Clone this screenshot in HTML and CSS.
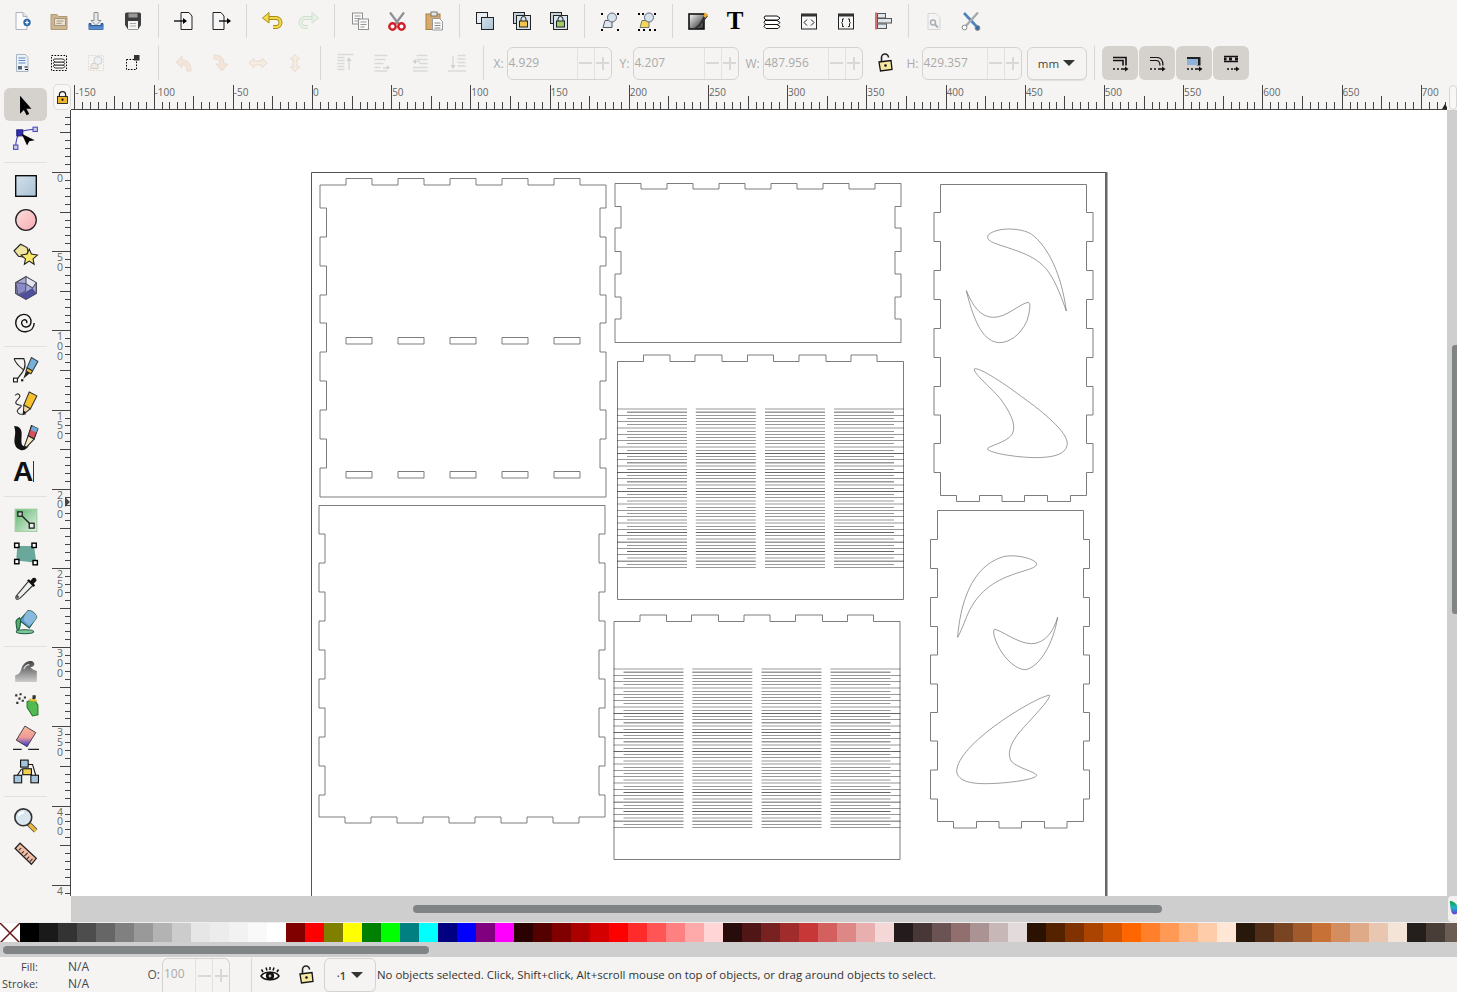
FILE: index.html

```html
<!DOCTYPE html>
<html lang="en">
<head>
<meta charset="UTF-8" />
<title>Inkscape</title>
<link rel="stylesheet" href="styles.css">
</head>
<body>
<svg class="defs" width="0" height="0">
  <defs>
    <linearGradient id="gBlue" x1="0" y1="0" x2="1" y2="1"><stop offset="0" stop-color="#d3e0ea"/><stop offset="1" stop-color="#a9c2d6"/></linearGradient>
    <linearGradient id="gPink" x1="0" y1="0" x2="1" y2="1"><stop offset="0" stop-color="#fbe0e0"/><stop offset="1" stop-color="#f7a9ae"/></linearGradient>
    <linearGradient id="gGreen" x1="0" y1="0" x2="1" y2="1"><stop offset="0" stop-color="#5db56e"/><stop offset="1" stop-color="#e4f2e4"/></linearGradient>
    <linearGradient id="gErase" x1="0" y1="0" x2="0" y2="1"><stop offset="0" stop-color="#f7b9a0"/><stop offset=".55" stop-color="#f09a94"/><stop offset="1" stop-color="#2a35d8"/></linearGradient>
    <linearGradient id="gWave" x1="0" y1="0" x2="0" y2="1"><stop offset="0" stop-color="#444"/><stop offset="1" stop-color="#ccc"/></linearGradient>
    <linearGradient id="gFs" x1="0" y1="0" x2="1" y2="1"><stop offset="0" stop-color="#fff"/><stop offset="1" stop-color="#222"/></linearGradient>
    <linearGradient id="gPick" x1="0" y1="0" x2="0" y2="1"><stop offset="0" stop-color="#14a03c"/><stop offset=".5" stop-color="#1fb4c8"/><stop offset="1" stop-color="#6a35d8"/></linearGradient>
  </defs>
</svg>

<div class="toolbar">
  <span class="tbtn"><svg class="ico" viewBox="0 0 24 24"><path d="M6 3.5h7l4 4v13H6z" fill="#fbfbfb" stroke="#aeb2bb"/><path d="M13 3.5v4h4" fill="#e4e4e4" stroke="#aeb2bb"/><circle cx="17" cy="13.5" r="3.7" fill="#2a69ad"/><path d="M15 13.5h4M17 11.5v4" stroke="#fff" stroke-width="1.2"/></svg></span>
  <span class="tbtn"><svg class="ico" viewBox="0 0 24 24"><path d="M4 5.5h6l1.500 2H20v13H4z" fill="#cdb592" stroke="#b09a78"/><rect x="7.5" y="9.5" width="11" height="7" fill="#e9e2d4" stroke="#a7957a"/><path d="M9.500 12h7M9.500 14.300h5" stroke="#a7957a"/></svg></span>
  <span class="tbtn"><svg class="ico" viewBox="0 0 24 24"><path d="M10 3.5h4v8h3l-5 5-5-5h3z" fill="#e6e8ea" stroke="#8b9096"/><path d="M5 14.5v6h14v-6l-2 0v2H7v-2z" fill="#3f77bd" stroke="#2d5c99"/><rect x="5" y="17.5" width="14" height="3" fill="#5a8ccc"/></svg></span>
  <span class="tbtn"><svg class="ico" viewBox="0 0 24 24"><path d="M4 5a1.500 1.500 0 0 1 1.500-1.500h13A1.500 1.500 0 0 1 20 5v11l-3 4.500H7L4 16z" fill="#3e3e3e"/><rect x="7.5" y="4.5" width="9" height="4" fill="#9a9a9a"/><rect x="7" y="12" width="10" height="8" fill="#f4f4f4"/><path d="M9 14.500h6M9 17h6" stroke="#aaa"/></svg></span>
  <span class="sep"></span>
  <span class="tbtn"><svg class="ico" viewBox="0 0 24 24"><path d="M9 3.5h8l3 3.500v13.500H9z" fill="#f6f6f6" stroke="#222"/><path d="M2 12h11" stroke="#000" stroke-width="1.3"/><path d="M11 9l4 3-4 3z" fill="#000"/></svg></span>
  <span class="tbtn"><svg class="ico" viewBox="0 0 24 24"><path d="M4 3.5h8l3 3.500v13.500H4z" fill="#f6f6f6" stroke="#222"/><path d="M10 12h10" stroke="#000" stroke-width="1.3"/><path d="M18 9l4 3-4 3z" fill="#000"/></svg></span>
  <span class="sep"></span>
  <span class="tbtn"><svg class="ico" viewBox="0 0 24 24"><path d="M5 9h11a4.500 4.500 0 0 1 0 9h-3" fill="none" stroke="#a88c10" stroke-width="4"/><path d="M5 9h11a4.500 4.500 0 0 1 0 9h-3" fill="none" stroke="#f3d84e" stroke-width="2.2"/><path d="M9 3.500L2.500 9 9 14z" fill="#f3d84e" stroke="#a88c10"/></svg></span>
  <span class="tbtn"><svg class="ico" viewBox="0 0 24 24"><path d="M19 9H8a4.500 4.500 0 0 0 0 9h3" fill="none" stroke="#cfe0cc" stroke-width="4"/><path d="M19 9H8a4.500 4.500 0 0 0 0 9h3" fill="none" stroke="#e8f1e6" stroke-width="2.2"/><path d="M15 3.500L21.500 9 15 14z" fill="#e8f1e6" stroke="#cfe0cc"/></svg></span>
  <span class="sep"></span>
  <span class="tbtn"><svg class="ico" viewBox="0 0 24 24"><rect x="4.5" y="4" width="10" height="11" fill="#fafafa" stroke="#8f8f8f"/><path d="M6.500 7h6M6.500 9.500h6M6.500 12h4" stroke="#999"/><rect x="10.5" y="10" width="10" height="10.5" fill="#fafafa" stroke="#8f8f8f"/><path d="M12.500 13h6M12.500 15.500h6M12.500 18h4" stroke="#999"/></svg></span>
  <span class="tbtn"><svg class="ico" viewBox="0 0 24 24"><path d="M5 3.500l9 12M19 3.500l-9 12" stroke="#8d9299" stroke-width="2.2"/><circle cx="7.5" cy="17.5" r="3.2" fill="#fff" stroke="#d21e27" stroke-width="2.4"/><circle cx="16.5" cy="17.5" r="3.2" fill="#fff" stroke="#d21e27" stroke-width="2.4"/></svg></span>
  <span class="tbtn"><svg class="ico" viewBox="0 0 24 24"><rect x="4" y="5" width="14" height="15.5" fill="#d5aa6c" stroke="#a97e3e"/><rect x="9" y="3" width="6" height="4" fill="#e8e8e8" stroke="#777"/><path d="M10.500 9.500h7l3 3v8.500h-10z" fill="#fbfbfb" stroke="#999"/><path d="M12.500 14h6M12.500 16.500h6M12.500 19h6" stroke="#8a8a8a"/></svg></span>
  <span class="sep"></span>
  <span class="tbtn"><svg class="ico" viewBox="0 0 24 24"><rect x="3.5" y="3.5" width="11" height="11" fill="#e8eef3" stroke="#222"/><rect x="8.5" y="8.5" width="12" height="12" fill="url(#gBlue)" stroke="#222"/></svg></span>
  <span class="tbtn"><svg class="ico" viewBox="0 0 24 24"><rect x="3.5" y="3.5" width="11" height="11" fill="#c3d3de" stroke="#222"/><rect x="6.5" y="6.5" width="14" height="14" fill="#d9e5ec" stroke="#222"/><rect x="9.5" y="12" width="8" height="6" fill="#f0c64a" stroke="#222"/><path d="M11 12v-2a2.500 2.500 0 0 1 5 0v2" fill="none" stroke="#222"/></svg></span>
  <span class="tbtn"><svg class="ico" viewBox="0 0 24 24"><rect x="3.5" y="3.5" width="11" height="11" fill="#c3d3de" stroke="#222"/><rect x="6.5" y="6.5" width="14" height="14" fill="#d9e5ec" stroke="#222"/><rect x="9.5" y="12" width="8" height="6" fill="#9ecb62" stroke="#222"/><path d="M11 12v-2a2.500 2.500 0 0 1 5 0v2" fill="none" stroke="#222"/></svg></span>
  <span class="sep"></span>
  <span class="tbtn"><svg class="ico" viewBox="0 0 24 24"><path d="M5 18.500l2-7h7v7z" fill="#dfe7ee" stroke="#556"/><circle cx="14" cy="8.5" r="4.5" fill="#d4e2ec" stroke="#667"/><path d="M3 4h2v2H3zM19 4h2v2h-2zM3 20h2v2H3zM19 20h2v2h-2z" fill="#000"/></svg></span>
  <span class="tbtn"><svg class="ico" viewBox="0 0 24 24"><path d="M5 18.500l2-7h7v7z" fill="#f3d759" stroke="#776"/><circle cx="14" cy="8.5" r="4.5" fill="#d4e2ec" stroke="#667"/><path d="M3 4h2v2H3zM7 4h2v2H7zM19 4h2v2h-2zM3 20h2v2H3zM8 20h2v2H8zM14 20h2v2h-2zM19 20h2v2h-2z" fill="#000"/></svg></span>
  <span class="sep"></span>
  <span class="tbtn"><svg class="ico" viewBox="0 0 24 24"><rect x="3" y="5" width="15" height="15" fill="url(#gFs)" stroke="#111" stroke-width="1.6"/><path d="M6 20c3-1 5-3 7-5l6-10 3 2-8 10c-2 2-5 3-8 3z" fill="#333"/><path d="M17 7l2-3.500 3 2-2.500 3.500z" fill="#f0a830"/></svg></span>
  <span class="tbtn"><span class="glyph-t">T</span></span>
  <span class="tbtn"><svg class="ico" viewBox="0 0 24 24"><g fill="#fff" stroke="#111"><path d="M5 15.500h12l3 2-2 2H6l-2-2z"/><path d="M5 11.500h12l3 2-2 2H6l-2-2z"/><path d="M5 7h12l3 2-2 2H6L4 9z"/></g></svg></span>
  <span class="tbtn"><svg class="ico" viewBox="0 0 24 24"><rect x="4.5" y="5" width="15" height="15" fill="#f6f6f6" stroke="#222"/><rect x="4.5" y="5" width="15" height="2.5" fill="#333"/><path d="M10 10.500l-3 3 3 3M14 10.500l3 3-3 3" fill="none" stroke="#222"/></svg></span>
  <span class="tbtn"><svg class="ico" viewBox="0 0 24 24"><rect x="4.5" y="5" width="15" height="15" fill="#f6f6f6" stroke="#222"/><rect x="4.5" y="5" width="15" height="2.5" fill="#333"/><path d="M10 10h-1.500v3l-1 .8 1 .8v3H10M14 10h1.500v3l1 .8-1 .8v3H14" fill="none" stroke="#222"/></svg></span>
  <span class="tbtn"><svg class="ico" viewBox="0 0 24 24"><path d="M5 3.500v17" stroke="#c42b2b" stroke-width="1.3"/><g fill="#dfe6ec" stroke="#555"><rect x="6.5" y="4.5" width="8" height="4.5"/><rect x="6.5" y="9.5" width="14" height="4.5"/><rect x="6.5" y="15" width="9" height="4.5"/></g></svg></span>
  <span class="sep"></span>
  <span class="tbtn"><svg class="ico" viewBox="0 0 24 24"><path d="M6 4.500h8l4 4v12H6z" fill="#f4f4f4" stroke="#d5d5d5"/><circle cx="11" cy="13.5" r="2.5" fill="none" stroke="#aab0b5" stroke-width="1.5"/><path d="M13 15.500l3 3" stroke="#aab0b5" stroke-width="2"/></svg></span>
  <span class="tbtn"><svg class="ico" viewBox="0 0 24 24"><path d="M5 4l14 15" stroke="#4f82bd" stroke-width="2.6"/><path d="M19 3.500L5 19" stroke="#a3a9af" stroke-width="2.4"/><circle cx="5.5" cy="18.5" r="2.4" fill="#fff" stroke="#888"/><circle cx="18.5" cy="19" r="2.4" fill="#3a6ba6" stroke="#888"/></svg></span>
</div>

<div class="toolbar toolbar-second">
  <span class="tbtn"><svg class="ico" viewBox="0 0 24 24"><path d="M6.500 3.500h9l2.500 3v14H6.500z" fill="#eef2f6" stroke="#a9b6c4"/><path d="M8.500 7h7M8.500 9.500h7M8.500 12h7" stroke="#5b8cc9" stroke-width="1.2"/><rect x="8" y="15" width="4" height="3.5" fill="#567"/><path d="M14.500 16h3M15 18.500h3" stroke="#111"/></svg></span>
  <span class="tbtn"><svg class="ico" viewBox="0 0 24 24"><rect x="4.5" y="4.5" width="15" height="15" fill="none" stroke="#000" stroke-dasharray="1.6 1.4"/><g fill="#fff" stroke="#333"><path d="M7 14h9l2 1.500-1.500 1.500H8L6.500 15.500z"/><path d="M7 11h9l2 1.500-1.500 1.500H8L6.500 12.500z"/><path d="M7 8h9l2 1.500-1.500 1.500H8L6.500 9.500z"/></g></svg></span>
  <span class="tbtn"><svg class="ico" viewBox="0 0 24 24"><rect x="4.5" y="4.5" width="15" height="15" fill="none" stroke="#e5d6cc" stroke-dasharray="1.6 1.4"/><path d="M6.500 17.500l1.500-5h6v5z" fill="#f0ebe5" stroke="#d5cfc8"/><circle cx="14" cy="9.5" r="4" fill="#eef0f1" stroke="#d0d0d0"/></svg></span>
  <span class="tbtn"><svg class="ico" viewBox="0 0 24 24"><rect x="5.5" y="8.5" width="10" height="10" fill="none" stroke="#000" stroke-dasharray="1.6 1.4"/><rect x="13" y="4" width="5.5" height="5.5" fill="#333"/></svg></span>
  <span class="sep"></span>
  <span class="tbtn"><svg class="ico" viewBox="0 0 24 24"><path d="M19 20c0-7-3-11-9-11V5L4 11l6 6v-4c3 0 5 3 5 7z" fill="#f2e6da" stroke="#eadccf"/></svg></span>
  <span class="tbtn"><svg class="ico" viewBox="0 0 24 24"><path d="M5 4c7 0 10 3 10 9h4l-6 7-6-7h4c0-3-2-5-6-5z" fill="#f2e6da" stroke="#eadccf"/></svg></span>
  <span class="tbtn"><svg class="ico" viewBox="0 0 24 24"><path d="M3 12l5-4.500V10h8V7.500L21 12l-5 4.500V14H8v2.500z" fill="#f5ede4" stroke="#e8dacb"/></svg></span>
  <span class="tbtn"><svg class="ico" viewBox="0 0 24 24"><path d="M12 3.500L16.500 8H14v8h2.500L12 20.500 7.500 16H10V8H7.500z" fill="#f5ede4" stroke="#e8dacb"/></svg></span>
  <span class="sep"></span>
  <span class="tbtn"><svg class="ico" viewBox="0 0 24 24"><path d="M3.500 3.500h16M3.500 6.500h7M3.500 9.500h7M3.500 12.500h7M3.500 15.500h7M3.500 18.500h7M15 7v12" stroke="#d9d9d9" stroke-width="1.5"/><path d="M12.500 10L15 6.500 17.500 10z" fill="#d0d0d0"/></svg></span>
  <span class="tbtn"><svg class="ico" viewBox="0 0 24 24"><path d="M3.500 4.500h13M3.500 8.500h11M3.500 12.500h9M3.500 16.500h6M3.500 20h13M12 17h6" stroke="#d9d9d9" stroke-width="1.5"/><path d="M16 14l3 3-3 1z" fill="#d0d0d0"/></svg></span>
  <span class="tbtn"><svg class="ico" viewBox="0 0 24 24"><path d="M8.500 4.500h11M8.500 8.500h11M11 12.500h8.500M5 10.500h7M5 16.500h14.500M5 20h14.500" stroke="#d9d9d9" stroke-width="1.5"/><path d="M8 8l-3.500 2.500L8 13z" fill="#d0d0d0"/></svg></span>
  <span class="tbtn"><svg class="ico" viewBox="0 0 24 24"><path d="M12.500 4.500h8M12.500 8h8M12.500 11.500h8M12.500 15h8M3 20h18M8 5v10" stroke="#d9d9d9" stroke-width="1.5"/><path d="M5.500 14L8 18l2.500-4z" fill="#d0d0d0"/></svg></span>
  <span class="sep sep-tight"></span>

  <span class="field-label label-x">X:</span>
  <span class="spin spin-x"><span class="spin-value">4.929</span><span class="spin-btn minus"></span><span class="spin-btn plus"></span></span>
  <span class="field-label label-y">Y:</span>
  <span class="spin spin-y"><span class="spin-value">4.207</span><span class="spin-btn minus"></span><span class="spin-btn plus"></span></span>
  <span class="field-label label-w">W:</span>
  <span class="spin spin-w"><span class="spin-value">487.956</span><span class="spin-btn minus"></span><span class="spin-btn plus"></span></span>
  <span class="lock-btn"><svg class="ico" viewBox="0 0 24 24"><path d="M8.500 10V6.500a3.500 3.500 0 0 1 7 0" fill="none" stroke="#222" stroke-width="1.6"/><path d="M6 11l12-1.500 1 9L7.500 20z" fill="#f5e6a0" stroke="#111" stroke-width="1.3"/><circle cx="12.5" cy="14.5" r="1.3" fill="#111"/></svg></span>
  <span class="field-label label-h">H:</span>
  <span class="spin spin-w"><span class="spin-value">429.357</span><span class="spin-btn minus"></span><span class="spin-btn plus"></span></span>
  <span class="unit-menu">mm<i class="caret"></i></span>
  <span class="sep sep-snap"></span>
  <span class="snap"><svg class="ico" viewBox="0 0 24 24"><path d="M5 6.500h13v8" fill="none" stroke="#111" stroke-width="1.6"/><path d="M5 9.500h10v5" fill="none" stroke="#111" stroke-width="1.6"/><path d="M5 18h2M9 18h2M13 18h6" stroke="#111" stroke-width="1.3"/><path d="M17 15.500l3.500 2.500-3.500 2.500z" fill="#111"/></svg></span>
  <span class="snap"><svg class="ico" viewBox="0 0 24 24"><path d="M5 6.500h7c4 0 6 3 6 8" fill="none" stroke="#111" stroke-width="1.2"/><path d="M5 9.500h6c3 0 4 2 4 5" fill="none" stroke="#111" stroke-width="1.2"/><path d="M5 18h2M9 18h2M13 18h6" stroke="#111" stroke-width="1.3"/><path d="M17 15.500l3.500 2.500-3.500 2.500z" fill="#111"/></svg></span>
  <span class="snap"><svg class="ico" viewBox="0 0 24 24"><path d="M5 6h13.500v8.500H15V9.500H5z" fill="#222"/><path d="M5 8h11v6H5z" fill="#8db3da"/><path d="M5 18h2M9 18h2M13 18h6" stroke="#111" stroke-width="1.3"/><path d="M17 15.500l3.500 2.500-3.500 2.500z" fill="#111"/></svg></span>
  <span class="snap"><svg class="ico" viewBox="0 0 24 24"><path d="M5 5.500h14M5 10.500h14" stroke="#111" stroke-width="1.4"/><path d="M5 8h2.500M10 8h3M16 8h3" stroke="#111" stroke-width="3"/><path d="M8 18h2M12 18h2M15 18h4" stroke="#111" stroke-width="1.3"/><path d="M17 15.500l3.500 2.500-3.500 2.500z" fill="#111"/></svg></span>
</div>

<div class="workspace">
  <div class="toolbox">
    <span class="tool active"><svg class="ico-tool" viewBox="0 0 24 24"><path d="M6.500 3.500V20l3.500-3.500 2.600 5 2.400-1.300-2.600-4.700H17z" fill="#000"/></svg></span>
    <span class="tool"><svg class="ico-tool" viewBox="0 0 24 24"><path d="M2.500 21c0-8 2-12 4-14s7-2.500 14-3" fill="none" stroke="#3d3db0"/><rect x="3.5" y="4.5" width="5.5" height="5.5" fill="#2e2eb8" stroke="#22227a"/><rect x="0.5" y="18.5" width="4" height="4" fill="#ccd" stroke="#4b4bc8"/><rect x="18.5" y="2" width="4" height="4" fill="#ccd" stroke="#4b4bc8"/><path d="M8 8l5 11 2-4 5-1z" fill="#000"/></svg></span>
    <span class="sep-h"></span>
    <span class="tool"><svg class="ico-tool" viewBox="0 0 24 24"><rect x="2.5" y="2.5" width="19" height="19" fill="url(#gBlue)" stroke="#000" stroke-width="1.2"/></svg></span>
    <span class="tool"><svg class="ico-tool" viewBox="0 0 24 24"><circle cx="12" cy="12" r="9.500" fill="url(#gPink)" stroke="#222" stroke-width="1.2"/></svg></span>
    <span class="tool"><svg class="ico-tool" viewBox="0 0 24 24"><path d="M1 9l6-6 6 3 1 4-3 5-6-1z" fill="#f0e4a0" stroke="#222"/><path d="M15 7.500l2 4.500 5.500 1-4 3.500 1 5-4.500-3-4.500 3 1-5-4-3.500 5.500-1z" fill="#f7e86c" stroke="#222"/></svg></span>
    <span class="tool"><svg class="ico-tool" viewBox="0 0 24 24"><path d="M12 1.500l9.500 6v9.500L12 22.500 2.500 17V7z" fill="#a9a9d6" stroke="#333"/><path d="M12 1.500L21.500 7 18 12l-6-4z" fill="#e6e6f2" stroke="#556"/><path d="M18 12l3.500 5-9.500 5.500-7-4 7-3z" fill="#4f4f9c"/><path d="M12 8l-.5 7-7 3.500L2.500 7z" fill="#8a8acb" stroke="#556"/></svg></span>
    <span class="tool"><svg class="ico-tool" viewBox="0 0 24 24"><path d="M12.500 13c1-1.500-.5-3.500-2.500-3s-3 3.500-1 5.500 6.500 1.500 7.500-2.500-2-8-6.500-8-8 4-7.500 8.500 4.500 8 9.500 7.500 7.500-4 7.500-8" fill="none" stroke="#111" stroke-width="1.3"/></svg></span>
    <span class="sep-h"></span>
    <span class="tool"><svg class="ico-tool" viewBox="0 0 24 24"><path d="M1 1.500h9c2 5 1 9-1 12s-4 5-5 7" fill="none" stroke="#222" stroke-width="1.100"/><path d="M1 1.500c2 6 6 8 8.500 10" fill="none" stroke="#222"/><rect x="0.5" y="19.5" width="3.500" height="3.500" fill="#fff" stroke="#111"/><rect x="7.5" y="20.5" width="2" height="2" fill="#111"/><path d="M17 .5l6 3.500-5 9-5-3z" fill="#78b0d8" stroke="#345"/><path d="M13 10l5 3-1.500 2.500-4.500-2.500z" fill="#f0c040" stroke="#333"/><path d="M12 13l3.500 2L9.500 20z" fill="#222"/></svg></span>
    <span class="tool"><svg class="ico-tool" viewBox="0 0 24 24"><path d="M2 4c3-3 6 0 3 3s-4 5 1 6-3 3-2 6 4 3 8 2" fill="none" stroke="#333"/><path d="M15 1l7 3.500-6 12-6-3.500z" fill="#f7c12e" stroke="#333"/><path d="M10 13l6 3.500-6.500 5z" fill="#f4d9a8" stroke="#333"/><path d="M9.500 18v3.500l2.500-2z" fill="#111"/></svg></span>
    <span class="tool"><svg class="ico-tool" viewBox="0 0 24 24"><path d="M1 1c5 0 7 3 7 7s-1 9 1 11 5 0 6-1c-1 3-4 6-8 5S.5 18 1.500 12 2 5 1 1z" fill="#111"/><path d="M17 .5l6 3-3.500 9.500-5.500-3z" fill="#d65060" stroke="#222"/><path d="M18 1l5 2.500-1.500 3.500-5-2.500z" fill="#6ea8d4"/><path d="M14 10l5.500 3-7 7.500-2-1z" fill="#f4e6c0" stroke="#222"/></svg></span>
    <span class="tool"><span class="glyph-a">A</span><i class="text-cursor"></i></span>
    <span class="sep-h"></span>
    <span class="tool"><svg class="ico-tool" viewBox="0 0 24 24"><rect x="2" y="2" width="20" height="20.5" fill="url(#gGreen)" stroke="#9ccc9f"/><path d="M7 7l9 9" stroke="#222" stroke-width="1.2"/><rect x="4.5" y="4.5" width="4" height="4" fill="#c4d8c4" stroke="#222" stroke-width="1.2"/><rect x="15" y="15" width="4.5" height="4.5" fill="#eee" stroke="#222" stroke-width="1.2"/></svg></span>
    <span class="tool"><svg class="ico-tool" viewBox="0 0 24 24"><path d="M4 4.500h15.500l2 15.500L3 18z" fill="#6aa89c"/><g fill="#fff" stroke="#000" stroke-width="1.3"><rect x="1.5" y="2" width="4" height="4"/><rect x="17.5" y="2" width="4" height="4"/><rect x="1.5" y="17" width="4" height="4"/><rect x="18.5" y="18" width="4" height="4"/></g></svg></span>
    <span class="tool"><svg class="ico-tool" viewBox="0 0 24 24"><path d="M15 5l4 4-11 11c-2 2-4 3-5 2s0-3 2-5z" fill="#eef0f0" stroke="#333"/><path d="M13 5l6 6 1.500-1.500-1.500-1.500 2.500-2.500c1-2-2-4-3.500-2.500L16 5.500 14.500 4z" fill="#111"/><path d="M3 19l2 2" stroke="#555" stroke-width="2.5"/></svg></span>
    <span class="tool"><svg class="ico-tool" viewBox="0 0 24 24"><path d="M14 1.500c4 0 7 3 8 6l-7 10-9-7z" fill="#5a9ad0" stroke="#1d5a40"/><path d="M14 1.500c-3 2-4 6-4 9l5 5c3-2 5-5 7-8-1-3-4-6-8-6z" fill="#89b9dd"/><path d="M6 8C4 9 2 11 3 14c0 3 1 5 1 6 3-1 3-7 3-10z" fill="#52b06a" stroke="#1d5a40"/><ellipse cx="11" cy="21" rx="8" ry="1.800" fill="#7ec89a" stroke="#1d5a40"/></svg></span>
    <span class="sep-h"></span>
    <span class="tool"><svg class="ico-tool" viewBox="0 0 24 24"><path d="M2 23v-6c4-1 5-3 6-7 2-6 9-8 11-5 2 2-1 5-3 4 1 2 3 3 6 4v10z" fill="url(#gWave)"/><path d="M10 11c1-2 3-4 5-4" stroke="#ddd" fill="none"/></svg></span>
    <span class="tool"><svg class="ico-tool" viewBox="0 0 24 24"><path d="M13 10l6-3 4 6v9l-5 1-5-8z" fill="#53b953" stroke="#2b7a2b"/><path d="M18 4h3v3l-3 1z" fill="#333"/><path d="M15 8l7 1" stroke="#e8c030" stroke-width="2"/><path d="M2 3h2v2H2zM6 2h2v2H6zM10 5h2v2h-2zM5 6h2v2H5zM8 8h2v2H8zM3 10h2v2H3z" fill="#333"/></svg></span>
    <span class="tool"><svg class="ico-tool" viewBox="0 0 24 24"><path d="M11 1l10 6-8 13-10-6z" fill="url(#gErase)" stroke="#333" stroke-width=".8"/><path d="M0 22.500h8M14 22.500h10" stroke="#222" stroke-width="1.3"/></svg></span>
    <span class="tool"><svg class="ico-tool" viewBox="0 0 24 24"><path d="M11 5h7l3 10M8 9L4 15M13 9v5" fill="none" stroke="#111"/><rect x="7" y="1" width="7" height="6.5" fill="#a6c4dc" stroke="#111"/><rect x="9" y="9" width="8" height="5.5" fill="#f1cf50" stroke="#111"/><rect x="1" y="15" width="7" height="7" fill="#a6c4dc" stroke="#111"/><rect x="16.5" y="15" width="7" height="7" fill="#a6c4dc" stroke="#111"/></svg></span>
    <span class="sep-h"></span>
    <span class="tool"><svg class="ico-tool" viewBox="0 0 24 24"><path d="M14 15l7 7" stroke="#555" stroke-width="4.5"/><path d="M15 16l6 6" stroke="#eeb73a" stroke-width="3"/><circle cx="9.5" cy="9.5" r="7.800" fill="#d9e6f0" stroke="#333" stroke-width="1.5"/><path d="M5 8c1-2 3-3 5-3" stroke="#fff" stroke-width="2" fill="none"/></svg></span>
    <span class="tool"><svg class="ico-tool" viewBox="0 0 24 24"><path d="M6.500 2L21.500 16 17 21.500 2 7z" fill="#f2bba3" stroke="#222" stroke-width="1.2"/><path d="M6 7l2-2M8.500 10l2-2M11 12.500l3-3M13.500 15l2-2M16 17.500l2.500-2.500" stroke="#333" transform="translate(-.5 1.5)"/></svg></span>
  </div>

  <div class="ruler-corner"><span class="lock-corner"><svg viewBox="0 0 24 24"><path d="M7 11V7.500a5 5 0 0 1 10 0V11" fill="none" stroke="#222" stroke-width="2"/><rect x="4" y="10.5" width="16" height="11" fill="#eeb52e" stroke="#111" stroke-width="1.3"/><circle cx="12" cy="15.5" r="1.8" fill="#111"/></svg></span></div>

  <div class="ruler-h">
    <span>-150</span><span>-100</span><span>-50</span><span>0</span><span>50</span><span>100</span><span>150</span><span>200</span><span>250</span><span>300</span><span>350</span><span>400</span><span>450</span><span>500</span><span>550</span><span>600</span><span>650</span><span>700</span>
    <i class="ruler-marker-h"></i>
  </div>

  <div class="corner-right"><span class="zoom-corner"></span></div>

  <div class="ruler-v">
    <span>0</span><span>50</span><span>100</span><span>150</span><span>200</span><span>250</span><span>300</span><span>350</span><span>400</span><span class="ruler-v-last">4</span>
    <i class="ruler-marker-v"></i>
  </div>

  <div class="canvas">
    <svg class="drawing" width="1376" height="786" viewBox="71 110 1376 786">
      <g class="cut">
        <!-- page -->
        <path class="page-edge" d="M311.5 896V172.5H1105.5"/>
        <rect x="1105" y="172" width="2.5" height="724" fill="#666"/>

        <!-- left panels -->
        <path d="M320 185H346V178.5H372V185H398V178.5H424V185H450V178.5H476V185H502V178.5H528V185H554V178.5H580V185H606V208H600V237H606V266H600V295H606V323H600V352H606V381H600V410H606V439H600V468H606V497H320V468H326.5V439H320V410H326.5V381H320V352H326.5V323H320V295H326.5V266H320V237H326.5V208H320Z"/>
        <path id="slots" d="M346 337.5h26v6.500h-26zM398 337.5h26v6.500h-26zM450 337.5h26v6.500h-26zM502 337.5h26v6.500h-26zM554 337.5h26v6.500h-26z"/>
        <use href="#slots" y="134"/>
        <path d="M319 505.5H605V534H599V563H605V592H599V621H605V650H599V679H605V708H599V737H605V766H599V795H605V817H579V823H553V817H527V823H501V817H475V823H449V817H423V823H397V817H371V823H345V817H319V795H325V766H319V737H325V708H319V679H325V650H319V621H325V592H319V563H325V534H319Z"/>

        <!-- middle panels -->
        <path d="M615 183.5H641V189H667V183.5H693V189H719V183.5H745V189H771V183.5H797V189H823V183.5H849V189H875V183.5H901V206.5H895V228H901V251.5H895V274H901V297H895V319H901V342.5H615V319H621V297H615V274H621V251.5H615V228H621V206.5H615Z"/>
        <g id="hatched">
          <path d="M617.5 361.5H643.5V355H670V361.5H695V355H722V361.5H747.5V355H773.5V361.5H799V355H826V361.5H851V355H877V361.5H903.5V599.5H617.5Z"/>
          <path class="hatch hatch-end" d="M622 408.7V568M899 408.7V568"/>
          <path class="hatch" d="M657 408.7V568M725.8 408.7V568M795 408.7V568M864 408.7V568"/>
        </g>
        <use href="#hatched" x="-3.5" y="260"/>

        <!-- right panels -->
        <path d="M940.5 184.5H1086.5V212.5H1093V241.5H1086.5V270.5H1093V299.5H1086.5V328.5H1093V357.5H1086.5V386.5H1093V415H1086.5V443.5H1093V472.5H1086.5V495.5H1070.5V501.5H1047.5V495.5H1024.5V501.5H1002V495.5H979.5V501.5H956.5V495.5H940.5V472.5H934V443.5H940.5V415H934V386.5H940.5V357.5H934V328.5H940.5V299.5H934V270.5H940.5V241.5H934V212.5H940.5Z"/>
        <g class="curves" transform="translate(925 175) scale(.3333)">
          <path d="M424 408C410 300 370 215 320 178C290 158 215 155 190 180C185 190 190 196 205 203C260 225 330 235 370 290C395 325 410 370 424 408Z"/>
          <path d="M124 347C145 395 165 425 205 427C245 428 285 385 310 382C318 385 315 410 305 440C285 480 255 503 222 503C180 500 150 455 124 347Z"/>
          <path d="M148 582C160 575 230 620 290 665C360 715 425 770 427 805C425 835 395 847 335 848C280 848 195 835 187 822C190 812 240 805 260 780C275 755 262 720 225 670C195 635 145 595 148 582Z"/>
        </g>
        <path d="M937.5 510.5H1083.5V539.5H1089.5V568.5H1083.5V597.5H1089.5V626.5H1083.5V655H1089.5V684H1083.5V712.5H1089.5V741H1083.5V770H1089.5V799H1083.5V821.5H1067V828H1044.5V821.5H1021.5V828H999V821.5H976.5V828H953.5V821.5H937.5V799H930.5V770H937.5V741H930.5V712.5H937.5V684H930.5V655H937.5V626.5H930.5V597.5H937.5V568.5H930.5V539.5H937.5Z"/>
        <g class="curves" transform="translate(925 500) scale(.3333)">
          <path d="M98 412C105 320 135 200 235 170C270 162 330 175 335 192C335 205 300 210 260 225C190 250 150 290 125 350C113 380 105 400 98 412Z"/>
          <path d="M398 352C385 395 360 430 320 431C280 432 225 388 208 388C200 395 215 440 240 470C260 495 285 510 302 509C345 500 385 430 398 352Z"/>
          <path d="M374 586C360 585 290 620 220 670C150 720 95 775 95 815C100 845 140 852 190 851C250 850 335 838 335 826C330 815 280 805 260 785C245 765 255 730 285 695C320 655 375 600 374 586Z"/>
        </g>
      </g>
    </svg>
  </div>

  <div class="scroll-v"><span class="thumb-v"></span></div>
  <div class="scroll-h"><span class="thumb-h"></span></div>
  <div class="picker"><svg viewBox="0 0 9 17"><path d="M1 0c4 0 7 3 8 5v9c-3 2-5 1-6-1C2 10 1 5 1 0z" fill="url(#gPick)"/></svg></div>
</div>

<div class="palette">
  <span class="swatch-none"><svg viewBox="0 0 20 20"><path d="M0 0l20 20M20 0L0 20" stroke="#6b1717" stroke-width="1.5"/></svg></span>
  <span class="swatch" style="background:#000000"></span><span class="swatch" style="background:#1a1a1a"></span><span class="swatch" style="background:#333333"></span><span class="swatch" style="background:#4d4d4d"></span><span class="swatch" style="background:#666666"></span><span class="swatch" style="background:#808080"></span><span class="swatch" style="background:#999999"></span><span class="swatch" style="background:#b3b3b3"></span><span class="swatch" style="background:#cccccc"></span><span class="swatch" style="background:#e6e6e6"></span><span class="swatch" style="background:#ececec"></span><span class="swatch" style="background:#f2f2f2"></span><span class="swatch" style="background:#f9f9f9"></span><span class="swatch" style="background:#ffffff"></span>
  <span class="swatch" style="background:#800000"></span><span class="swatch" style="background:#ff0000"></span><span class="swatch" style="background:#808000"></span><span class="swatch" style="background:#ffff00"></span><span class="swatch" style="background:#008000"></span><span class="swatch" style="background:#00ff00"></span><span class="swatch" style="background:#008080"></span><span class="swatch" style="background:#00ffff"></span><span class="swatch" style="background:#000080"></span><span class="swatch" style="background:#0000ff"></span><span class="swatch" style="background:#800080"></span><span class="swatch" style="background:#ff00ff"></span>
  <span class="swatch" style="background:#2b0000"></span><span class="swatch" style="background:#550000"></span><span class="swatch" style="background:#800000"></span><span class="swatch" style="background:#aa0000"></span><span class="swatch" style="background:#d40000"></span><span class="swatch" style="background:#ff0000"></span><span class="swatch" style="background:#ff2a2a"></span><span class="swatch" style="background:#ff5555"></span><span class="swatch" style="background:#ff8080"></span><span class="swatch" style="background:#ffaaaa"></span><span class="swatch" style="background:#ffd5d5"></span>
  <span class="swatch" style="background:#280b0b"></span><span class="swatch" style="background:#501616"></span><span class="swatch" style="background:#782121"></span><span class="swatch" style="background:#a02c2c"></span><span class="swatch" style="background:#c83737"></span><span class="swatch" style="background:#d35f5f"></span><span class="swatch" style="background:#de8787"></span><span class="swatch" style="background:#e9afaf"></span><span class="swatch" style="background:#f4d7d7"></span>
  <span class="swatch" style="background:#241c1c"></span><span class="swatch" style="background:#483737"></span><span class="swatch" style="background:#6c5353"></span><span class="swatch" style="background:#916f6f"></span><span class="swatch" style="background:#ac9393"></span><span class="swatch" style="background:#c8b7b7"></span><span class="swatch" style="background:#e3dbdb"></span>
  <span class="swatch" style="background:#2b1100"></span><span class="swatch" style="background:#552200"></span><span class="swatch" style="background:#803300"></span><span class="swatch" style="background:#aa4400"></span><span class="swatch" style="background:#d45500"></span><span class="swatch" style="background:#ff6600"></span><span class="swatch" style="background:#ff7f2a"></span><span class="swatch" style="background:#ff9955"></span><span class="swatch" style="background:#ffb380"></span><span class="swatch" style="background:#ffccaa"></span><span class="swatch" style="background:#ffe6d5"></span>
  <span class="swatch" style="background:#28170b"></span><span class="swatch" style="background:#502d16"></span><span class="swatch" style="background:#784421"></span><span class="swatch" style="background:#a05a2c"></span><span class="swatch" style="background:#c87137"></span><span class="swatch" style="background:#d38d5f"></span><span class="swatch" style="background:#deaa87"></span><span class="swatch" style="background:#e9c6af"></span><span class="swatch" style="background:#f4e3d7"></span>
  <span class="swatch" style="background:#241f1c"></span><span class="swatch" style="background:#483e37"></span><span class="swatch" style="background:#6c5d53"></span>
</div>
<div class="palette-scroll"><span class="thumb-palette"></span></div>

<div class="statusbar">
  <div class="fill-stroke">
    <span class="fs-name">Fill:</span><span class="fs-value">N/A</span>
    <span class="fs-name">Stroke:</span><span class="fs-value">N/A</span>
  </div>
  <span class="field-label label-o">O:</span>
  <span class="spin spin-o"><span class="spin-value">100</span><span class="spin-btn minus"></span><span class="spin-btn plus"></span></span>
  <span class="sep sep-status"></span>
  <span class="status-icon"><svg class="ico" viewBox="0 0 24 24"><path d="M3 13c3-5 15-5 18 0-3 5-15 5-18 0z" fill="#fff" stroke="#111" stroke-width="1.5"/><circle cx="12" cy="13" r="4.2" fill="#111"/><circle cx="12" cy="13" r="1.4" fill="#bbb"/><path d="M5 9L3.500 6.500M9 7.500L8 4.500M12 7V4M15 7.500l1-3M19 9l1.500-2.500" stroke="#111" stroke-width="1.5"/></svg></span>
  <span class="status-icon"><svg class="ico" viewBox="0 0 24 24"><path d="M8.500 10V6.500a3.500 3.500 0 0 1 7 0" fill="none" stroke="#222" stroke-width="1.6"/><path d="M6 11l12-1.500 1 9L7.500 20z" fill="#f5e6a0" stroke="#111" stroke-width="1.3"/><circle cx="12.5" cy="14.5" r="1.3" fill="#111"/></svg></span>
  <span class="layer-menu"><span class="layer-name">·1</span><i class="caret"></i></span>
  <span class="message">No objects selected. Click, Shift+click, Alt+scroll mouse on top of objects, or drag around objects to select.</span>
</div>
</body>
</html>
```

FILE: styles.css

```css
:root {
  --bg: #f5f4f2;
  --trough: #cecece;
  --thumb: #808484;
  --tick: #444;
  --line: #d9d7d4;
  --border: #d5d3d0;
  --active: #d5d1cd;
  --muted: #aaa;
  --ink: #444;
  --font: 'Open Sans', 'Noto Sans', sans-serif;
}

html, body {
  margin: 0;
  height: 100%;
}

body {
  width: 1457px;
  height: 992px;
  overflow: hidden;
  background: var(--bg);
  font-family: var(--font);
  font-size: 11px;
  color: var(--ink);
  display: flex;
  flex-direction: column;
}

.defs { position: absolute; }

svg { display: block; }

/* top toolbars */
.toolbar {
  flex: none;
  height: 42px;
  padding-left: 3.5px;
  display: flex;
  align-items: center;
}

.toolbar-second {
  margin-bottom: 1px;
}

.tbtn {
  flex: none;
  width: 37px;
  display: flex;
  justify-content: center;
  align-items: center;
}

.ico { width: 24px; height: 24px; }

.sep {
  flex: none;
  width: 1px;
  height: 34px;
  margin: 0 6.5px;
  background: var(--line);
}

.sep-tight { margin: 0 0 0 7.5px; }
.sep-snap { margin: 0 7px; }

.glyph-t {
  font-family: 'Liberation Serif', serif;
  font-weight: bold;
  font-size: 25px;
  line-height: 24px;
  color: #000;
}

.field-label {
  flex: none;
  font-size: 12px;
  color: var(--muted);
}

.label-x { margin-left: 9.5px; width: 13px; }
.label-y { margin-left: 8px; width: 13px; }
.label-w { margin-left: 7px; width: 17px; }
.label-h { width: 15px; }

.spin {
  flex: none;
  box-sizing: border-box;
  height: 33px;
  display: flex;
  border: 1px solid var(--border);
  border-radius: 6px;
}

.spin-x { width: 105px; }
.spin-y { width: 106px; }
.spin-w { width: 100px; }

.spin-value {
  flex: 1;
  padding-left: 1px;
  font-size: 12px;
  line-height: 29px;
  color: var(--muted);
}

.spin-btn {
  flex: none;
  width: 17px;
  border-left: 1px solid #e4e2df;
  box-sizing: border-box;
  background: linear-gradient(#d8d8d8, #d8d8d8) center / 13px 2px no-repeat;
}

.spin-btn.plus {
  background:
    linear-gradient(#d8d8d8, #d8d8d8) center / 13px 2px no-repeat,
    linear-gradient(#d8d8d8, #d8d8d8) center / 2px 13px no-repeat;
}

.lock-btn {
  flex: none;
  width: 44px;
  display: flex;
  justify-content: center;
}

.unit-menu {
  flex: none;
  box-sizing: border-box;
  width: 60px;
  height: 33px;
  margin-left: 5px;
  display: flex;
  justify-content: center;
  align-items: center;
  gap: 4px;
  border: 1px solid var(--border);
  border-radius: 6px;
  box-shadow: 0 1px 1px rgba(0,0,0,0.08);
  font-size: 11.5px;
}

.caret {
  width: 0;
  height: 0;
  border-left: 6px solid transparent;
  border-right: 6px solid transparent;
  border-top: 6px solid #333;
}

.snap {
  flex: none;
  width: 36px;
  height: 34px;
  margin-right: 1px;
  display: flex;
  justify-content: center;
  align-items: center;
  background: var(--active);
  border-radius: 6px;
}

/* main area */
.workspace {
  flex: none;
  height: 837px;
  display: grid;
  grid-template-columns: 52px 19px 1376px 10px;
  grid-template-rows: 25px 786px 26px;
  position: relative;
}

.toolbox {
  grid-row: 1 / 4;
  padding-top: 3px;
  display: flex;
  flex-direction: column;
  align-items: flex-start;
  overflow: hidden;
}

.tool {
  flex: none;
  width: 43px;
  height: 34px;
  margin-left: 4px;
  display: flex;
  justify-content: center;
  align-items: center;
  position: relative;
}

.tool.active {
  height: 33px;
  background: var(--active);
  border-radius: 6px;
}

.ico-tool { width: 26px; height: 26px; }

.sep-h {
  flex: none;
  width: 43px;
  height: 1px;
  margin: 6.5px 0 6.5px 4px;
  background: #e2e0dd;
}

.glyph-a {
  font-family: 'Liberation Sans', sans-serif;
  font-weight: bold;
  font-size: 28px;
  line-height: 26px;
  color: #111;
  margin-right: 5px;
}

.text-cursor {
  position: absolute;
  left: 29px;
  top: 6px;
  width: 1px;
  height: 21px;
  background: #333;
}

.ruler-corner { display: flex; }

.lock-corner {
  box-sizing: border-box;
  width: 18px;
  height: 26px;
  margin: -1px 0 0 1px;
  display: flex;
  justify-content: center;
  align-items: center;
  border: 1px solid #dedcd9;
  border-radius: 5px;
  background: #f8f7f5;
}

.lock-corner svg { width: 15px; height: 15px; }

/* rulers: ticks are gradients, labels sit in flow at the 50mm step */
.ruler-h {
  position: relative;
  overflow: hidden;
  box-sizing: border-box;
  padding-left: 3.4px;
  display: flex;
  border-bottom: 1px solid var(--tick);
  background-image:
    repeating-linear-gradient(90deg, transparent 0 3.4px, var(--tick) 3.4px 4.4px, transparent 4.4px 79.2px),
    repeating-linear-gradient(90deg, transparent 0 3.4px, var(--tick) 3.4px 4.4px, transparent 4.4px 39.6px),
    repeating-linear-gradient(90deg, transparent 0 3.4px, var(--tick) 3.4px 4.4px, transparent 4.4px 7.92px);
  background-size: 100% 24px, 100% 13px, 100% 7px;
  background-position: bottom;
  background-repeat: no-repeat;
}

.ruler-h span {
  flex: 0 0 79.2px;
  padding: 0 0 0 1px;
  box-sizing: border-box;
  font-size: 10px;
  line-height: 14px;
  color: #666;
}

.ruler-marker-h {
  position: absolute;
  left: 1371px;
  bottom: 0;
  border-left: 3px solid transparent;
  border-right: 3px solid transparent;
  border-bottom: 5px solid #222;
}

.corner-right {
  display: flex;
  background: var(--bg);
}

.zoom-corner {
  box-sizing: border-box;
  width: 12px;
  height: 25px;
  margin-left: 2px;
  border: 1px solid #d8d6d3;
  border-radius: 4px;
  background: #f8f7f5;
}

.ruler-v {
  position: relative;
  overflow: hidden;
  box-sizing: border-box;
  padding-top: 62px;
  display: flex;
  flex-direction: column;
  border-right: 1px solid var(--tick);
  background-image:
    repeating-linear-gradient(180deg, transparent 0 62px, var(--tick) 62px 63px, transparent 63px 79.2px),
    repeating-linear-gradient(180deg, transparent 0 22.4px, var(--tick) 22.4px 23.4px, transparent 23.4px 39.6px),
    repeating-linear-gradient(180deg, transparent 0 6.56px, var(--tick) 6.56px 7.56px, transparent 7.56px 7.92px);
  background-size: 18px 100%, 10px 100%, 5px 100%;
  background-position: right;
  background-repeat: no-repeat;
}

.ruler-v span {
  flex: 0 0 79.2px;
  box-sizing: border-box;
  width: 8px;
  margin-left: 5px;
  padding-top: 2px;
  font-size: 10.5px;
  line-height: 9.7px;
  word-break: break-all;
  color: #666;
}

.ruler-v .ruler-v-last { flex-basis: 11px; }

.ruler-marker-v {
  position: absolute;
  right: 0;
  top: 387px;
  border-top: 5px solid transparent;
  border-bottom: 5px solid transparent;
  border-left: 5px solid #444;
}

/* canvas with the laser-cut sheet on it */
.canvas {
  background: #fff;
  overflow: hidden;
}

.cut path {
  fill: none;
  stroke: #666;
  stroke-width: .85;
}

.cut .page-edge { stroke: #555; stroke-width: 1; }

.cut .hatch {
  stroke: #333;
  stroke-width: 60;
  stroke-dasharray: .55 2.62;
}

.cut .hatch-end {
  stroke-width: 10;
  stroke-dasharray: .55 5.79;
}

.curves path { stroke-width: 1.9; }

.scroll-v {
  display: flex;
  justify-content: flex-end;
  background: var(--trough);
  padding-top: 235px;
  grid-column: 4;
  grid-row: 2 / 4;
}

.thumb-v {
  width: 5px;
  height: 269px;
  border-radius: 3px 0 0 3px;
  background: var(--thumb);
}

.scroll-h {
  grid-column: 3;
  grid-row: 3;
  padding: 9px 0 0 342px;
  background: var(--trough);
}

.thumb-h {
  display: block;
  width: 749px;
  height: 8px;
  border-radius: 4px;
  background: var(--thumb);
}

/* colour-managed corner button, cut by the window edge */
.picker {
  position: absolute;
  right: 0;
  bottom: 0;
  box-sizing: border-box;
  width: 9px;
  height: 26px;
  padding: 4px 0 0 1px;
  background: #f2f1ef;
  border-radius: 4px 0 0 4px;
}

.picker svg { width: 8px; height: 17px; }

/* palette */
.palette {
  flex: none;
  height: 20px;
  display: flex;
  overflow: hidden;
  border-top: 1px solid #eee;
  box-sizing: border-box;
}

.swatch-none {
  flex: none;
  width: 20px;
  background: #fff;
}

.swatch {
  flex: none;
  width: 19px;
}

.palette-scroll {
  flex: none;
  height: 15px;
  padding: 4px 0 0 3px;
  box-sizing: border-box;
  background: var(--trough);
}

.thumb-palette {
  display: block;
  width: 426px;
  height: 8px;
  border-radius: 4px;
  background: var(--thumb);
}

/* status bar */
.statusbar {
  flex: none;
  height: 35px;
  display: flex;
  align-items: center;
  overflow: hidden;
}

.fill-stroke {
  flex: none;
  width: 140px;
  display: grid;
  grid-template-columns: 38px auto;
  column-gap: 30px;
  line-height: 17px;
}

.fs-value { font-size: 12px; }

.fs-name { text-align: right; }

.label-o {
  width: 20px;
  color: #555;
  text-align: right;
}

.spin-o {
  width: 68px;
  height: 34px;
  margin-left: 2px;
  margin-top: 1px;
  border-radius: 6px 6px 0 0;
  border-bottom: 0;
}

.sep-status { margin: 0 0 0 21px; }

.status-icon {
  flex: none;
  width: 36px;
  display: flex;
  justify-content: center;
}

.layer-menu {
  flex: none;
  box-sizing: border-box;
  width: 52px;
  height: 34px;
  margin: 1px 1px 0 0;
  display: flex;
  justify-content: center;
  align-items: center;
  gap: 5px;
  border: 1px solid var(--border);
  border-radius: 6px;
  box-shadow: 0 1px 1px rgba(0,0,0,0.08);
  font-weight: 600;
}

.message {
  flex: none;
  font-size: 11.45px;
  color: #333;
}
```
